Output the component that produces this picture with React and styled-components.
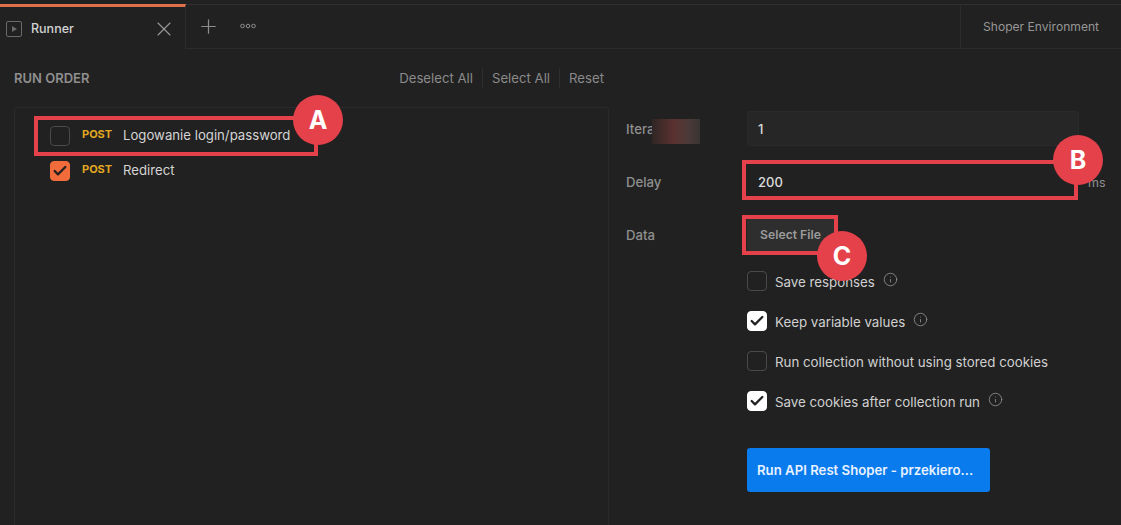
import React from "react";
import styled, { createGlobalStyle } from "styled-components";
import { Check, Info, Plus, X } from "lucide-react";

const GlobalStyle = createGlobalStyle`
  html, body {
    margin: 0;
    height: 100%;
    background: #212121;
  }
  * {
    box-sizing: border-box;
  }
`;

const Page = styled.div`
  width: 1121px;
  height: 525px;
  overflow: hidden;
  padding-top: 4px;
  background: #212121;
  font-family: Inter, "Liberation Sans", sans-serif;
  color: #d4d4d4;
`;

const TabBar = styled.div`
  display: flex;
  height: 45px;
  border-top: 1px solid #303030;
  border-bottom: 1px solid #2c2c2c;
`;

const Tab = styled.div`
  display: flex;
  align-items: center;
  width: 186px;
  margin: -1px 0 -1px;
  padding: 1px 9px 0 6px;
  border-top: 3px solid #e0704a;
  border-right: 1px solid #2c2c2c;
  background: #212121;
  font-size: 12.5px;
  font-weight: 500;
  color: #d2d2d2;
`;

const TabName = styled.span`
  flex: 1;
  margin-left: 9px;
`;

const TabIcon = styled.svg`
  width: 16px;
  height: 16px;
  color: #6a6a6a;
`;

const TabTools = styled.div`
  display: flex;
  align-items: center;
  flex: 1;
  padding: 0 0 1px 11px;
  gap: 20px;
  color: #8c8c8c;
`;

const Environment = styled.div`
  display: flex;
  align-items: center;
  width: 161px;
  margin-left: auto;
  padding: 0 0 1px 22px;
  border-left: 1px solid #2c2c2c;
  font-size: 12.1px;
  color: #969696;
`;

const Content = styled.div`
  display: flex;
`;

const OrderPane = styled.section`
  width: 609px;
  padding: 0 0 0 14px;
`;

const OrderHeader = styled.div`
  display: flex;
  align-items: center;
  justify-content: space-between;
  height: 58px;
  padding-right: 5px;
`;

const OrderTitle = styled.h2`
  margin: 0;
  font-size: 13px;
  font-weight: 600;
  color: #8f8f8f;
`;

const OrderActions = styled.div`
  display: flex;
  align-items: center;
`;

const OrderAction = styled.span`
  padding: 2px 9px;
  border-left: 1px solid #2e2e2e;
  font-size: 13.2px;
  color: #8a8a8a;

  &:first-child {
    border-left: 0;
  }

  &:last-child {
    padding-right: 0;
  }
`;

const OrderList = styled.div`
  height: 420px;
  padding: 10px 0 0 35px;
  border: 1px solid #2b2b2b;
  border-radius: 3px;
`;

const RequestRow = styled.div`
  position: relative;
  display: flex;
  align-items: center;
  height: 35px;
`;

const Box = styled.span`
  display: flex;
  align-items: center;
  justify-content: center;
  flex: none;
  width: 20px;
  height: 20px;
  border-radius: 4px;
  border: 1px solid
    ${(p) =>
      p.$tone === "orange" ? "#f26b3a" : p.$tone === "white" ? "#fff" : "#4a4a4a"};
  background: ${(p) =>
    p.$tone === "orange" ? "#f26b3a" : p.$tone === "white" ? "#fff" : "transparent"};
  color: #212121;
`;

const Method = styled.span`
  width: 41px;
  margin-left: 12px;
  padding-bottom: 3px;
  font-size: 11px;
  font-weight: 700;
  color: #e2a822;
`;

const RequestName = styled.span`
  padding-bottom: 1px;
  font-size: 13.2px;
  color: #d4d4d4;
`;

const SettingsPane = styled.section`
  flex: 1;
  padding: 62px 0 0 17px;
`;

const FormRow = styled.div`
  position: relative;
  display: flex;
  align-items: center;
  height: 35px;
  margin-bottom: 18px;
`;

const FormLabel = styled.label`
  width: 121px;
  padding-top: 1px;
  font-size: 13.2px;
  font-weight: 500;
  color: #8f8f8f;
`;

const FieldBox = styled.div`
  display: flex;
  align-items: center;
  width: 332px;
  height: 35px;
  padding: 1px 0 0 10px;
  border: 1px solid ${(p) => (p.$plain ? "transparent" : "#2a2a2a")};
  border-radius: 3px;
  background: ${(p) => (p.$plain ? "transparent" : "#262626")};
  font-size: 13px;
  font-weight: 500;
  color: #dcdcdc;
`;

const Unit = styled.span`
  margin-left: 9px;
  padding-top: 1px;
  font-size: 12.5px;
  color: #8f8f8f;
`;

const FileButton = styled.button`
  width: 87px;
  height: 35px;
  padding: 0;
  border: 0;
  border-radius: 3px;
  background: #2e2e2e;
  font: 600 12.2px Inter, "Liberation Sans", sans-serif;
  color: #9c9c9c;
`;

const Options = styled.div`
  display: flex;
  flex-direction: column;
  gap: 20px;
  margin-top: 19px;
  padding-left: 121px;
`;

const Option = styled.div`
  display: flex;
  align-items: center;
  height: 20px;
  font-size: 13.3px;
  color: #d0d0d0;
`;

const OptionText = styled.span`
  margin: 2px 0 0 8px;
`;

const Hint = styled(Info)`
  width: 15px;
  height: 15px;
  margin: -3px 0 0 8px;
  color: #8c8c8c;
`;

const RunRow = styled.div`
  margin-top: 37px;
  padding-left: 121px;
`;

const RunButton = styled.button`
  display: block;
  width: 243px;
  height: 44px;
  padding: 0 0 0 10px;
  border: 0;
  border-radius: 3px;
  background: #097bed;
  text-align: left;
  font: 600 13.2px Inter, "Liberation Sans", sans-serif;
  color: #e8f2ff;
`;

/* tutorial markup drawn over the screenshot */
const Frame = styled.div`
  position: absolute;
  border: 4px solid #e4414a;
  pointer-events: none;
`;

const Badge = styled.span`
  position: absolute;
  display: flex;
  align-items: center;
  justify-content: center;
  width: 50px;
  height: 50px;
  border-radius: 50%;
  background: #e4414a;
  font: 700 25px Inter, "Liberation Sans", sans-serif;
  color: #fff;
`;

const Smudge = styled.div`
  position: absolute;
  left: 26px;
  top: -1px;
  width: 48px;
  height: 25px;
  background: linear-gradient(90deg, #2f2624 0%, #5a3230 45%, #4c3a38 75%, #3a3432 100%);
`;

const RedactedLabel = styled(FormLabel)`
  position: relative;
  display: block;
  white-space: nowrap;
`;

const options = [
  { label: "Save responses", checked: false, hint: true },
  { label: "Keep variable values", checked: true, hint: true },
  { label: "Run collection without using stored cookies", checked: false, hint: false },
  { label: "Save cookies after collection run", checked: true, hint: true },
];

const App = () => {
  return (
    <Page>
      <GlobalStyle />
      <TabBar>
        <Tab>
          <TabIcon viewBox="0 0 16 16" fill="none">
            <rect x="0.5" y="0.5" width="15" height="15" rx="1.5" stroke="currentColor" />
            <path d="M6 5l5 3-5 3z" fill="currentColor" />
          </TabIcon>
          <TabName>Runner</TabName>
          <X size={24} strokeWidth={1.1} color="#9a9a9a" />
        </Tab>
        <TabTools>
          <Plus size={23} strokeWidth={1.3} />
          <svg width="16" height="6" viewBox="0 0 16 6" fill="none" stroke="currentColor">
            <circle cx="2.5" cy="3" r="1.8" />
            <circle cx="8" cy="3" r="1.8" />
            <circle cx="13.5" cy="3" r="1.8" />
          </svg>
        </TabTools>
        <Environment>Shoper Environment</Environment>
      </TabBar>

      <Content>
        <OrderPane>
          <OrderHeader>
            <OrderTitle>RUN ORDER</OrderTitle>
            <OrderActions>
              <OrderAction>Deselect All</OrderAction>
              <OrderAction>Select All</OrderAction>
              <OrderAction>Reset</OrderAction>
            </OrderActions>
          </OrderHeader>
          <OrderList>
            <RequestRow>
              <Box />
              <Method>POST</Method>
              <RequestName>Logowanie login/password</RequestName>
              <Frame style={{ left: -16, top: -2, width: 284, height: 40 }} />
              <Badge style={{ left: 243, top: -23 }}>A</Badge>
            </RequestRow>
            <RequestRow>
              <Box $tone="orange">
                <Check size={16} strokeWidth={3.4} />
              </Box>
              <Method>POST</Method>
              <RequestName>Redirect</RequestName>
            </RequestRow>
          </OrderList>
        </OrderPane>

        <SettingsPane>
          <FormRow>
            <RedactedLabel>
              Iterations
              <Smudge />
            </RedactedLabel>
            <FieldBox>1</FieldBox>
          </FormRow>
          <FormRow>
            <FormLabel>Delay</FormLabel>
            <FieldBox $plain>200</FieldBox>
            <Unit>ms</Unit>
            <Frame style={{ left: 116, top: -4, width: 336, height: 40 }} />
            <Badge style={{ left: 427, top: -29 }}>B</Badge>
          </FormRow>
          <FormRow>
            <FormLabel>Data</FormLabel>
            <FileButton>Select File</FileButton>
            <Frame style={{ left: 116, top: -2, width: 96, height: 40 }} />
            <Badge style={{ left: 191, top: 14 }}>C</Badge>
          </FormRow>
          <Options>
            {options.map((option) => (
              <Option key={option.label}>
                <Box $tone={option.checked ? "white" : undefined}>
                  {option.checked && <Check size={16} strokeWidth={3.4} />}
                </Box>
                <OptionText>{option.label}</OptionText>
                {option.hint && <Hint strokeWidth={1.4} />}
              </Option>
            ))}
          </Options>
          <RunRow>
            <RunButton>Run API Rest Shoper - przekiero...</RunButton>
          </RunRow>
        </SettingsPane>
      </Content>
    </Page>
  );
};

export default App;
